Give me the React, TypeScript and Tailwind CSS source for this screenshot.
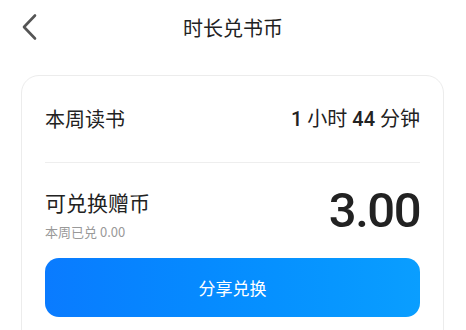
import React from "react";

export default function App() {
  const cjk = { fontFamily: "'Noto Sans CJK SC', sans-serif" } as React.CSSProperties;
  return (
    <div className="w-[466px] h-[330px] overflow-hidden bg-white" style={cjk}>
      <div className="relative h-14 flex items-center justify-center">
        <svg className="absolute left-[18px] top-[12px]" width="24" height="30" viewBox="0 0 24 30">
          <path d="M17 3.5 L6 15 L17 26.5" fill="none" stroke="#555" strokeWidth="2.6" strokeLinecap="round" strokeLinejoin="round" />
        </svg>
        <span className="text-[20px] text-[#222] leading-none">时长兑书币</span>
      </div>
      <div className="ml-[21px] w-[423px] mt-[19px] h-[300px] rounded-[18px] border border-[#ececec] px-[23px]">
        <div className="h-[86px] flex items-center justify-between">
          <span className="text-[20px] text-[#222] leading-none">本周读书</span>
          <span className="text-[20px] text-[#222] leading-none" style={{ fontFamily: "Roboto, 'Noto Sans CJK SC', sans-serif" }}>
            <span className="font-medium">1</span> 小时 <span className="font-medium">44</span> 分钟
          </span>
        </div>
        <div className="h-px bg-[#eeeeee]" />
        <div className="pt-[25px] flex items-start justify-between">
          <div className="flex flex-col">
            <span className="text-[21px] leading-[28px] text-[#222]">可兑换赠币</span>
            <span className="mt-[7px] text-[13px] leading-[18px] text-[#999]">本周已兑 0.00</span>
          </div>
          <span
            className="-mt-[2px] text-[49px] leading-[49px] font-medium text-[#222] tracking-[-1.5px]"
            style={{ fontFamily: "Roboto, sans-serif" }}
          >
            3.00
          </span>
        </div>
        <button className="mt-[17px] w-full h-[59px] rounded-[14px] bg-gradient-to-r from-[#0a7bff] to-[#0a9eff] text-white text-[17px] flex items-center justify-center">
          分享兑换
        </button>
      </div>
    </div>
  );
}
